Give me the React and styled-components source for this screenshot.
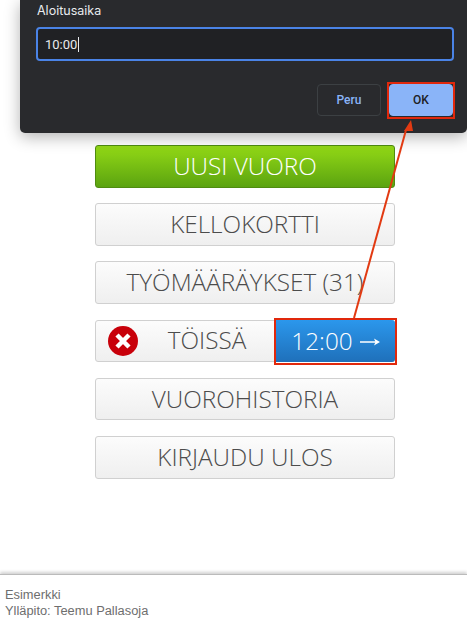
import React from 'react';
import styled, { createGlobalStyle } from 'styled-components';

const GlobalStyle = createGlobalStyle`
	html, body {
		margin: 0;
		padding: 0;
		background: #fff;
	}
`;

const Page = styled.div`
	position: relative;
	width: 467px;
	height: 623px;
	overflow: hidden;
	display: flex;
	flex-direction: column;
	font-family: 'Open Sans', sans-serif;
`;

const Dialog = styled.div`
	position: absolute;
	top: 0;
	left: 20px;
	right: 0;
	height: 133px;
	box-sizing: border-box;
	padding: 2px 13px 0 16px;
	background: #292a2d;
	border-radius: 0 0 5px 5px;
	box-shadow: 0 4px 16px rgba(0, 0, 0, 0.3);
	font-family: Roboto, sans-serif;
	z-index: 2;
`;

const Label = styled.div`
	height: 16px;
	line-height: 16px;
	padding: 1px 0 0 1px;
	margin-bottom: -1px;
	font-family: Inter, sans-serif;
	font-size: 12.5px;
	color: #e8eaed;
`;

const Input = styled.div`
	box-sizing: border-box;
	height: 34px;
	margin-top: 9px;
	padding-left: 7px;
	display: flex;
	align-items: center;
	background: #202124;
	border: 2px solid #4a83e6;
	border-radius: 4px;
	font-size: 13px;
	color: #e8eaed;
`;

const Caret = styled.span`
	width: 1px;
	height: 15px;
	margin-left: 1px;
	background: #e8eaed;
`;

const DialogActions = styled.div`
	display: flex;
	justify-content: flex-end;
	gap: 8px;
	margin-top: 23px;
	padding-right: 1px;
`;

const DialogButton = styled.div`
	position: relative;
	box-sizing: border-box;
	width: 64px;
	height: 32px;
	display: flex;
	align-items: center;
	justify-content: center;
	border-radius: 4px;
	font-size: 12px;
	font-weight: 500;
	border: 1px solid ${({ $primary }) => ($primary ? '#8ab4f8' : '#3c4043')};
	background: ${({ $primary }) => ($primary ? '#8ab4f8' : 'transparent')};
	color: ${({ $primary }) => ($primary ? '#202124' : '#8ab4f8')};

	${({ $primary }) =>
		$primary &&
		`&::after {
			content: '';
			position: absolute;
			inset: -3px -3px -4px -3px;
			border: 2px solid #e0280c;
		}`}
`;

const Menu = styled.div`
	width: 300px;
	margin: 145px 0 0 95px;
	display: flex;
	flex-direction: column;
	gap: 15.6px;
`;

const MenuButton = styled.div`
	box-sizing: border-box;
	height: 42.6px;
	padding-bottom: 2px;
	display: flex;
	align-items: center;
	justify-content: center;
	border-radius: 3px;
	border: 1px solid ${({ $green }) => ($green ? '#4f8c10' : '#d0d0d0')};
	background: ${({ $green }) =>
		$green
			? 'linear-gradient(to bottom, #93d916, #5ba310)'
			: 'linear-gradient(to bottom, #fcfcfc, #efefef)'};
	color: ${({ $green }) => ($green ? '#fff' : '#4c4c4c')};
	font-size: 24.3px;
	font-weight: 300;
	white-space: nowrap;
`;

const StatusRow = styled(MenuButton)`
	justify-content: flex-start;
	padding-left: 12px;
	padding-bottom: 0;
`;

const StatusIcon = styled.svg`
	flex: none;
	width: 30px;
	height: 30px;
`;

const StatusText = styled.span`
	flex: 1;
	text-align: center;
	margin-top: -2px;
`;

const TimeButton = styled.div`
	position: relative;
	flex: none;
	align-self: stretch;
	width: 119px;
	margin: -1px -1px -1px 0;
	display: flex;
	align-items: center;
	justify-content: center;
	gap: 7px;
	border-radius: 0 3px 3px 0;
	background: linear-gradient(to bottom, #2b97ec, #1f70ba);
	color: #fff;

	&::after {
		content: '';
		position: absolute;
		inset: -2px -2px -3px -2px;
		border: 2px solid #e0280c;
	}
`;

const TimeArrow = styled.svg`
	width: 20px;
	height: 12px;
	margin-top: 2px;
`;

const Footer = styled.footer`
	margin-top: auto;
	height: 49px;
	box-sizing: border-box;
	padding: 12px 5px 0;
	border-top: 1px solid #bbb;
	box-shadow: 0 -2px 3px rgba(0, 0, 0, 0.18);
	background: #fff;
	font-family: 'Liberation Sans', Arial, sans-serif;
	font-size: 12.85px;
	line-height: 16px;
	color: #6e6e6e;
`;

const Annotation = styled.svg`
	position: absolute;
	top: 0;
	left: 0;
	z-index: 3;
	pointer-events: none;
`;

export default function App() {
	return (
		<Page>
			<GlobalStyle />
			<Dialog>
				<Label>Aloitusaika</Label>
				<Input>
					10:00
					<Caret />
				</Input>
				<DialogActions>
					<DialogButton>Peru</DialogButton>
					<DialogButton $primary>OK</DialogButton>
				</DialogActions>
			</Dialog>

			<Menu>
				<MenuButton $green>UUSI VUORO</MenuButton>
				<MenuButton>KELLOKORTTI</MenuButton>
				<MenuButton>TYÖMÄÄRÄYKSET (31)</MenuButton>
				<StatusRow>
					<StatusIcon viewBox="0 0 30 30">
						<circle cx="15" cy="15" r="15" fill="#c8000a" />
						<path d="M9 9 L21 21 M21 9 L9 21" stroke="#fff" strokeWidth="4.5" />
					</StatusIcon>
					<StatusText>TÖISSÄ</StatusText>
					<TimeButton>
						12:00
						<TimeArrow viewBox="0 0 20 12">
							<path d="M0 6 H17" fill="none" stroke="#fff" strokeWidth="1.5" />
							<path d="M20 6 L14 2.5 L15.5 6 L14 9.5 Z" fill="#fff" />
						</TimeArrow>
					</TimeButton>
				</StatusRow>
				<MenuButton>VUOROHISTORIA</MenuButton>
				<MenuButton>KIRJAUDU ULOS</MenuButton>
			</Menu>

			<Footer>
				Esimerkki
				<br />
				Ylläpito: Teemu Pallasoja
			</Footer>

			<Annotation width="467" height="623" viewBox="0 0 467 623">
				<path d="M354 318 L406 130" stroke="#e23a12" strokeWidth="2" />
				<path d="M411 120 L404 131 L413 131 Z" fill="#e23a12" />
			</Annotation>
		</Page>
	);
}
